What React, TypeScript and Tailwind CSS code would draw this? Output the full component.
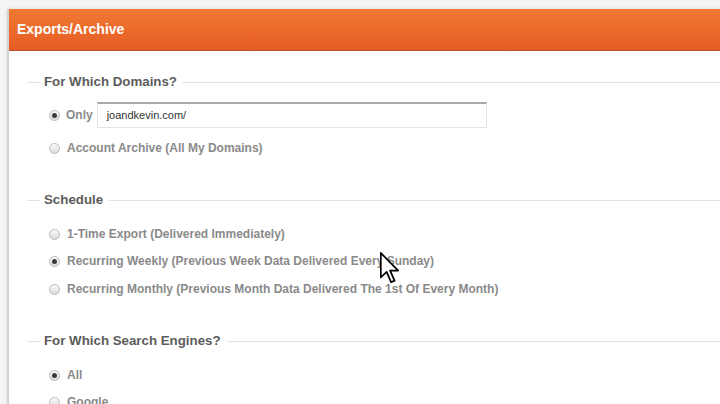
import React from "react";

const font = { fontFamily: '"Liberation Sans", Arial, sans-serif' };

const Radio = ({ checked }: { checked?: boolean }) => (
  <span className="relative inline-flex h-[11px] w-[11px] shrink-0 items-center justify-center rounded-full border border-[#b9b9b9] bg-gradient-to-b from-[#fafafa] to-[#dcdcdc]">
    {checked && <span className="h-[5px] w-[5px] rounded-full bg-[#3a3a3a]" />}
  </span>
);

const Legend = ({ title, className }: { title: string; className?: string }) => (
  <div className={`flex h-[16px] items-center ${className ?? ""}`}>
    <div className="h-px w-[13px] bg-[#e2e2e2]" />
    <span className="px-[4px] text-[13.3px] font-bold text-[#5c5c5c]">{title}</span>
    <div className="ml-[2px] h-px flex-1 bg-[#e2e2e2]" />
  </div>
);

const Option = ({
  label,
  checked,
  className,
}: {
  label: string;
  checked?: boolean;
  className?: string;
}) => (
  <div className={`flex h-[20px] items-center pl-[22px] ${className ?? ""}`}>
    <Radio checked={checked} />
    <span className="ml-[7px] text-[12px] font-bold text-[#8a8a8a]">{label}</span>
  </div>
);

export default function App() {
  return (
    <div
      className="relative h-[404px] w-[720px] overflow-hidden bg-[#f4f5f5] pl-[7px] pt-[9px]"
      style={font}
    >
      <div className="h-full border-l-2 border-[#d3d3d3] bg-white shadow-[0_0_4px_rgba(0,0,0,0.12)]">
        {/* header */}
        <div className="flex h-[42px] items-center border-b border-[#b9502a] bg-gradient-to-b from-[#f07a33] to-[#e65b24] pl-[8px]">
          <h2 className="text-[14px] font-bold text-white">Exports/Archive</h2>
        </div>

        <div className="pl-[18px]">
          <Legend title="For Which Domains?" className="mt-[23px]" />
          <div className="mt-[12px] flex h-[26px] items-center pl-[22px]">
            <Radio checked />
            <span className="ml-[6px] text-[12px] font-bold text-[#8a8a8a]">Only</span>
            <div className="ml-[4px] flex h-[26px] w-[390px] items-center border border-[#e4e4e4] border-t-2 border-t-[#a9a9a9] px-[9px] text-[11px] text-[#333]">
              joandkevin.com/
            </div>
          </div>
          <Option label="Account Archive (All My Domains)" className="mt-[10px]" />

          <Legend title="Schedule" className="mt-[34px]" />
          <Option label="1-Time Export (Delivered Immediately)" className="mt-[16px]" />
          <Option
            label="Recurring Weekly (Previous Week Data Delivered Every Sunday)"
            checked
            className="mt-[7px]"
          />
          <Option
            label="Recurring Monthly (Previous Month Data Delivered The 1st Of Every Month)"
            className="mt-[8px]"
          />

          <Legend title="For Which Search Engines?" className="mt-[34px]" />
          <Option label="All" checked className="mt-[16px]" />
          <Option label="Google" className="mt-[7px]" />
        </div>
      </div>

      {/* mouse pointer */}
      <svg
        className="absolute left-[380px] top-[252px]"
        width="19"
        height="32"
        viewBox="0 0 12 20"
      >
        <path
          d="M0.5 0.5 L0.5 16 L4.2 12.4 L7 19 L9.2 18 L6.4 11.6 L11.5 11.6 Z"
          fill="white"
          stroke="black"
          strokeWidth="1.1"
          strokeLinejoin="round"
        />
      </svg>
    </div>
  );
}
